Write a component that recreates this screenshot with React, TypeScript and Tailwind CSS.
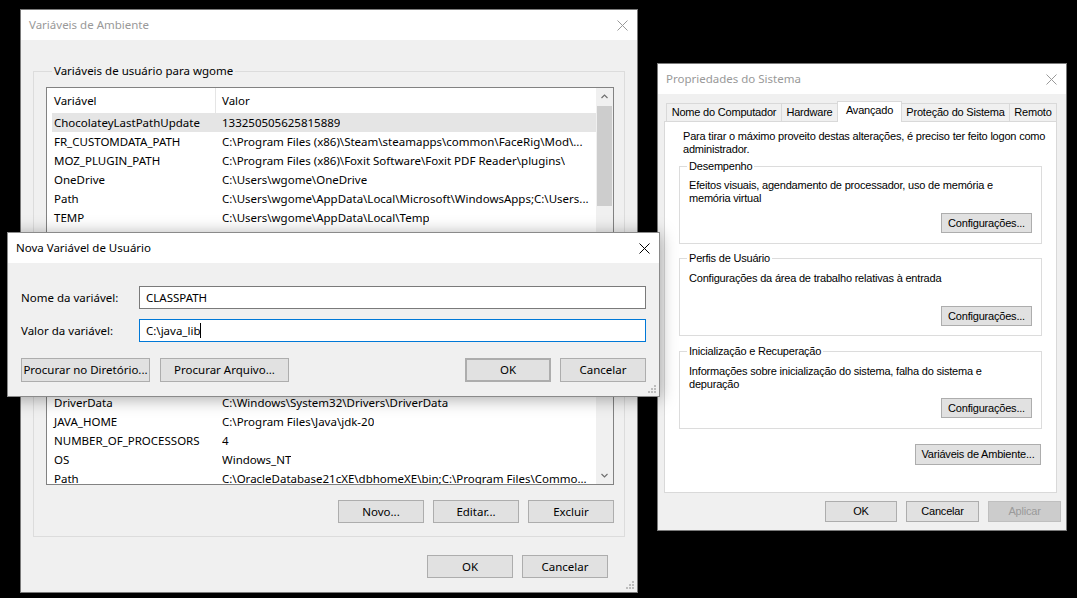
import React from "react";

const SEGOE = "font-['Noto_Sans',sans-serif] text-[11.5px]";
const MSSANS = "font-['Liberation_Sans',Arial,sans-serif] text-[11px] tracking-[-0.2px]";

const userVarsTop: [string, string][] = [
  ["ChocolateyLastPathUpdate", "133250505625815889"],
  ["FR_CUSTOMDATA_PATH", "C:\\Program Files (x86)\\Steam\\steamapps\\common\\FaceRig\\Mod\\..."],
  ["MOZ_PLUGIN_PATH", "C:\\Program Files (x86)\\Foxit Software\\Foxit PDF Reader\\plugins\\"],
  ["OneDrive", "C:\\Users\\wgome\\OneDrive"],
  ["Path", "C:\\Users\\wgome\\AppData\\Local\\Microsoft\\WindowsApps;C:\\Users..."],
  ["TEMP", "C:\\Users\\wgome\\AppData\\Local\\Temp"],
  ["TMP", "C:\\Users\\wgome\\AppData\\Local\\Temp"],
];

const userVarsBottom: [string, string][] = [
  ["DriverData", "C:\\Windows\\System32\\Drivers\\DriverData"],
  ["JAVA_HOME", "C:\\Program Files\\Java\\jdk-20"],
  ["NUMBER_OF_PROCESSORS", "4"],
  ["OS", "Windows_NT"],
  ["Path", "C:\\OracleDatabase21cXE\\dbhomeXE\\bin;C:\\Program Files\\Commo..."],
];

function CloseX({ color }: { color: string }) {
  return (
    <svg width="11" height="11" viewBox="0 0 11 11">
      <path d="M0.5 0.5L10.5 10.5M10.5 0.5L0.5 10.5" stroke={color} strokeWidth="1" />
    </svg>
  );
}

function TitleBar({ title, active }: { title: string; active?: boolean }) {
  return (
    <div className={`h-[30px] bg-white flex items-center justify-between pl-[8px] pr-[9px] ${SEGOE}`}>
      <span className={active ? "text-black" : "text-[#999999]"}>{title}</span>
      <CloseX color={active ? "#000000" : "#999999"} />
    </div>
  );
}

function Grip() {
  return (
    <svg width="10" height="10" viewBox="0 0 10 10" className="absolute right-[2px] bottom-[2px]">
      {[
        [7, 1],
        [4, 4],
        [7, 4],
        [1, 7],
        [4, 7],
        [7, 7],
      ].map(([x, y], i) => (
        <rect key={i} x={x} y={y} width="2" height="2" fill="#bdbdbd" />
      ))}
    </svg>
  );
}

function Btn({ children, className = "" }: { children: React.ReactNode; className?: string }) {
  return (
    <button
      type="button"
      className={`flex items-center justify-center bg-[#e1e1e1] border border-[#adadad] text-black whitespace-nowrap ${className}`}
    >
      {children}
    </button>
  );
}

function Row({ name, value, selected }: { name: string; value: string; selected?: boolean }) {
  return (
    <div
      className={`ml-[5px] h-[19px] shrink-0 flex items-center whitespace-nowrap ${selected ? "bg-[#e5e5e5]" : ""}`}
    >
      <span className="w-[170px] pl-[2px] shrink-0">{name}</span>
      <span className="overflow-hidden">{value}</span>
    </div>
  );
}

function Chevron({ up }: { up?: boolean }) {
  return (
    <svg width="7" height="5" viewBox="0 0 7 5">
      <polyline
        points={up ? "0.5,4 3.5,1 6.5,4" : "0.5,1 3.5,4 6.5,1"}
        fill="none"
        stroke="#707070"
        strokeWidth="1.2"
      />
    </svg>
  );
}

function VarList() {
  return (
    <div className="mt-[8px] h-[398px] border border-[#828282] bg-white flex overflow-hidden text-black">
      <div className="flex-1 flex flex-col overflow-hidden">
        <div className="h-[25px] flex shrink-0">
          <div className="w-[169px] pl-[7px] border-r border-[#e5e5e5] flex items-center">Variável</div>
          <div className="pl-[6px] flex items-center">Valor</div>
        </div>
        {userVarsTop.map(([n, v], i) => (
          <Row key={n} name={n} value={v} selected={i === 0} />
        ))}
        <div className="h-[147px] shrink-0" />
        {userVarsBottom.map(([n, v]) => (
          <Row key={n + v} name={n} value={v} />
        ))}
      </div>
      <div className="w-[17px] bg-[#f0f0f0] flex flex-col shrink-0">
        <div className="h-[17px] flex items-center justify-center shrink-0">
          <Chevron up />
        </div>
        <div className="mx-[1px] mt-[1px] h-[100px] bg-[#cdcdcd] shrink-0" />
        <div className="flex-1" />
        <div className="h-[17px] flex items-center justify-center shrink-0">
          <Chevron />
        </div>
      </div>
    </div>
  );
}

function EnvVarsWindow() {
  return (
    <div className="absolute left-[20px] top-[9px] w-[618px] h-[584px] border border-[#7a7a7a] bg-[#f0f0f0]">
      <TitleBar title="Variáveis de Ambiente" />
      <div className={`relative h-[552px] px-[12px] pt-[23px] ${SEGOE} text-black`}>
        <fieldset className="h-[474px] border border-[#dcdcdc] pl-[12px] pr-[10px]">
          <legend className="ml-[6px] px-[2px] leading-[16px]">Variáveis de usuário para wgome</legend>
          <VarList />
          <div className="mt-[15px] flex justify-end gap-[9px]">
            <Btn className="w-[86px] h-[23px]">Novo...</Btn>
            <Btn className="w-[86px] h-[23px]">Editar...</Btn>
            <Btn className="w-[86px] h-[23px]">Excluir</Btn>
          </div>
        </fieldset>
        <div className="mt-[18px] pr-[17px] flex justify-end gap-[9px]">
          <Btn className="w-[86px] h-[23px]">OK</Btn>
          <Btn className="w-[86px] h-[23px]">Cancelar</Btn>
        </div>
        <Grip />
      </div>
    </div>
  );
}

function NewVarDialog() {
  return (
    <div className="absolute left-[7px] top-[232px] w-[653px] h-[165px] border border-[#8a8a8a] bg-[#f0f0f0] shadow-[0_2px_16px_rgba(0,0,0,0.35)]">
      <TitleBar title="Nova Variável de Usuário" active />
      <div className={`relative h-[133px] pl-[13px] pr-[13px] pt-[23px] ${SEGOE} text-black`}>
        <div className="flex items-center h-[23px]">
          <span className="w-[118px] shrink-0">Nome da variável:</span>
          <div className="flex-1 h-[23px] border border-[#7a7a7a] bg-white pl-[6px] flex items-center">CLASSPATH</div>
        </div>
        <div className="mt-[10px] flex items-center h-[23px]">
          <span className="w-[118px] shrink-0">Valor da variável:</span>
          <div className="flex-1 h-[23px] border border-[#0078d7] bg-white pl-[6px] flex items-center">
            <span>{"C:\\java_lib"}</span>
            <span className="inline-block w-[1px] h-[15px] bg-black" />
          </div>
        </div>
        <div className="mt-[16px] flex items-center">
          <Btn className="w-[129px] h-[24px]">Procurar no Diretório...</Btn>
          <Btn className="ml-[10px] w-[129px] h-[24px]">Procurar Arquivo...</Btn>
          <div className="flex-1" />
          <Btn className="w-[86px] h-[24px] border-2 border-[#0078d7]">OK</Btn>
          <Btn className="ml-[9px] w-[86px] h-[24px]">Cancelar</Btn>
        </div>
        <Grip />
      </div>
    </div>
  );
}

const tabs = [
  { label: "Nome do Computador", w: "w-[115px]" },
  { label: "Hardware", w: "w-[56px]" },
  { label: "Avançado", w: "w-[65px]" },
  { label: "Proteção do Sistema", w: "w-[107px]" },
  { label: "Remoto", w: "w-[48px]" },
];

function Group({
  title,
  lines,
  textMt,
  btnMt,
  className = "",
}: {
  title: string;
  lines: string[];
  textMt: string;
  btnMt: string;
  className?: string;
}) {
  return (
    <fieldset className={`h-[84px] border border-[#dcdcdc] px-[9px] ${className}`}>
      <legend className="ml-[-2px] px-[2px] leading-[13px]">{title}</legend>
      <div className={`${textMt} leading-[13px] whitespace-nowrap`}>
        {lines.map((l) => (
          <div key={l}>{l}</div>
        ))}
      </div>
      <div className={`${btnMt} flex justify-end`}>
        <Btn className="w-[91px] h-[20px]">Configurações...</Btn>
      </div>
    </fieldset>
  );
}

function SystemPropsWindow() {
  return (
    <div className="absolute left-[657px] top-[63px] w-[410px] h-[468px] border border-[#7a7a7a] bg-[#f0f0f0]">
      <TitleBar title="Propriedades do Sistema" />
      <div className={`h-[436px] pl-[6px] pr-[5px] pt-[7px] flex flex-col ${MSSANS} text-black`}>
        <div className="flex items-end h-[20px] pl-[2px] shrink-0">
          {tabs.map((t, i) => {
            const active = i === 2;
            if (active) {
              return (
                <div
                  key={t.label}
                  className={`${t.w} h-[21px] -mb-[1px] relative z-10 bg-white border-t border-l border-r border-[#d9d9d9] flex items-center justify-center pb-[3px]`}
                >
                  {t.label}
                </div>
              );
            }
            return (
              <div
                key={t.label}
                className={`${t.w} h-[18px] border-t border-[#d9d9d9] bg-[#f0f0f0] flex items-center justify-center whitespace-nowrap ${
                  i === 3 ? "" : "border-l"
                } ${i === tabs.length - 1 ? "border-r" : ""}`}
              >
                {t.label}
              </div>
            );
          })}
        </div>
        <div className="mr-[4px] h-[372px] bg-white border border-[#d9d9d9] px-[14px] pt-[8px] shrink-0">
          <div className="pl-[4px] leading-[13px] whitespace-nowrap">
            <div>Para tirar o máximo proveito destas alterações, é preciso ter feito logon como</div>
            <div>administrador.</div>
          </div>
          <Group
            className="mt-[4px]"
            title="Desempenho"
            lines={["Efeitos visuais, agendamento de processador, uso de memória e", "memória virtual"]}
            textMt="mt-[6px]"
            btnMt="mt-[8px]"
          />
          <Group
            className="mt-[8px]"
            title="Perfis de Usuário"
            lines={["Configurações da área de trabalho relativas à entrada"]}
            textMt="mt-[7px]"
            btnMt="mt-[21px]"
          />
          <Group
            className="mt-[9px]"
            title="Inicialização e Recuperação"
            lines={["Informações sobre inicialização do sistema, falha do sistema e", "depuração"]}
            textMt="mt-[7px]"
            btnMt="mt-[7px]"
          />
          <div className="mt-[15px] flex justify-end pr-[1px]">
            <Btn className="w-[126px] h-[21px]">Variáveis de Ambiente...</Btn>
          </div>
        </div>
        <div className="mt-[8px] flex justify-end gap-[9px]">
          <Btn className="w-[72px] h-[21px]">OK</Btn>
          <Btn className="w-[73px] h-[21px]">Cancelar</Btn>
          <button
            type="button"
            className="w-[73px] h-[21px] flex items-center justify-center bg-[#cccccc] border border-[#bfbfbf] text-[#9a9a9a]"
          >
            Aplicar
          </button>
        </div>
      </div>
    </div>
  );
}

export default function App() {
  return (
    <div className="relative w-[1077px] h-[598px] bg-black overflow-hidden">
      <SystemPropsWindow />
      <EnvVarsWindow />
      <NewVarDialog />
    </div>
  );
}
